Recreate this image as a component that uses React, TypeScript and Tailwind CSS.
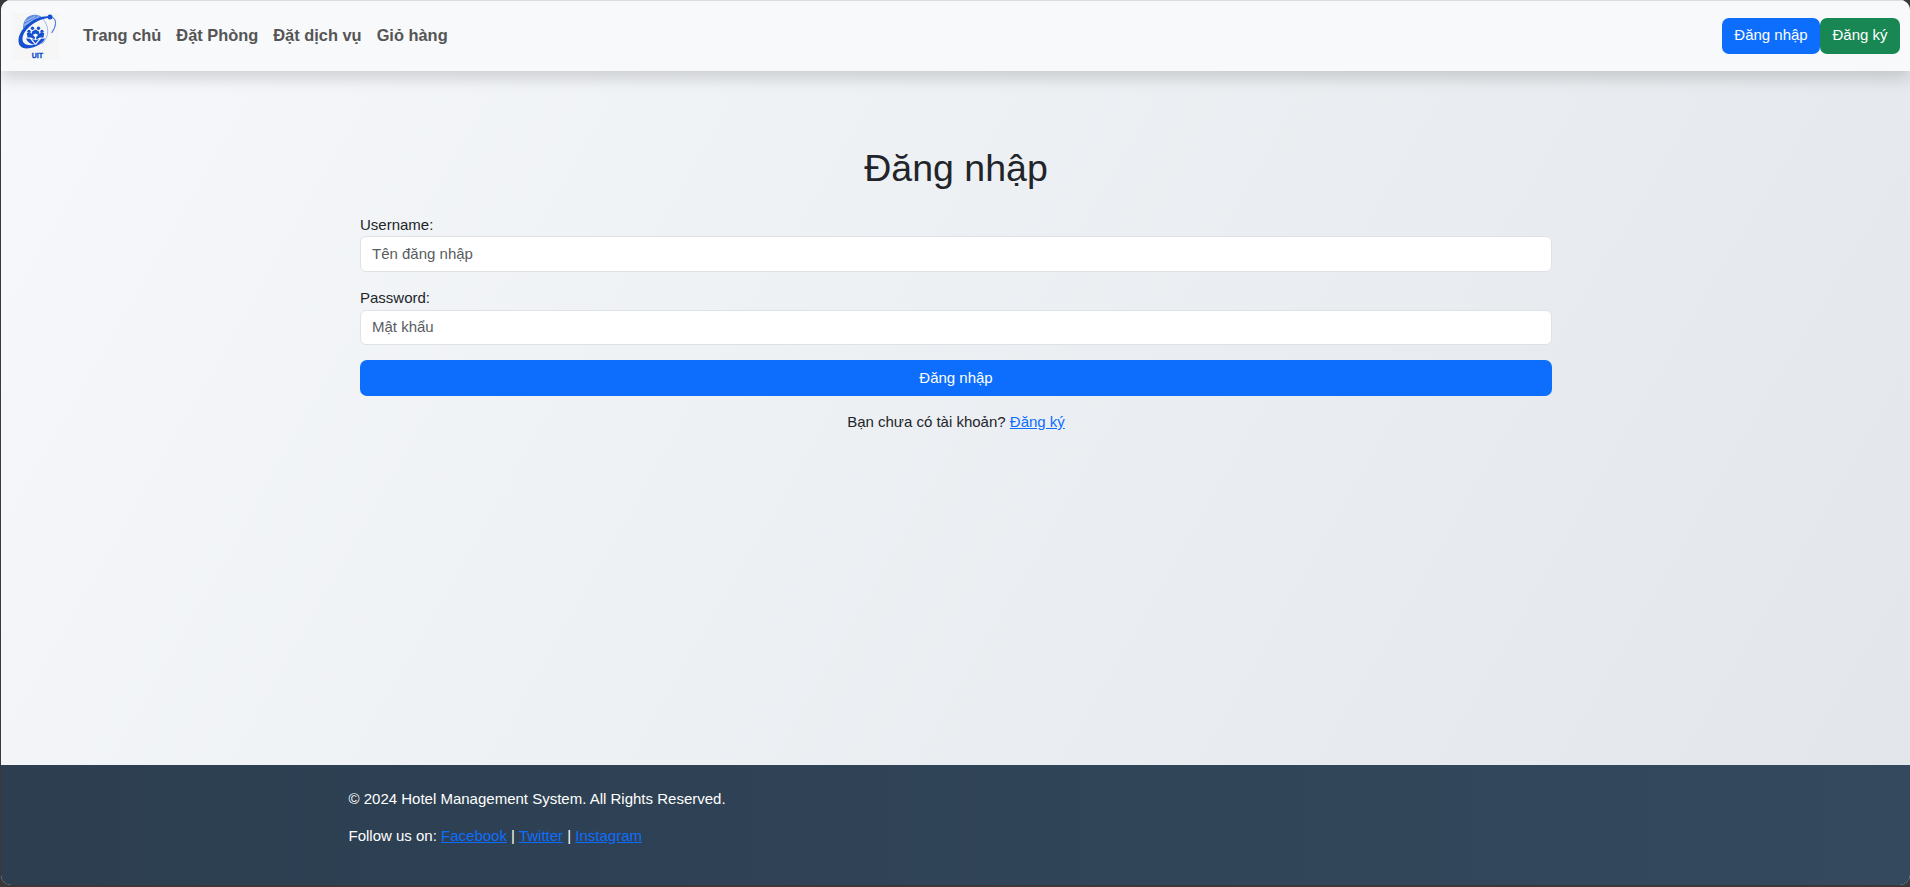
const link = "text-[#0d6efd] underline";

function Logo() {
  return (
    <svg width="47" height="47" viewBox="0 0 47 47" className="shrink-0">
      <rect width="47" height="47" fill="#f6f6f6" />
      <path d="M11 16 C10.500 7 16 1.800 23 1.800 C26 1.800 28.500 3 30 4.300 C22 6 16 9.500 11 16Z" fill="#5f8ee4" />
      <path d="M11.500 12.500 L27 3.500 M13 8.500 L23 3.500" stroke="#dbe6fa" strokeWidth="0.600" />
      <path d="M38 3.300 C24 1.500 7.500 14 6.500 27 C6 37.500 18 38 31 29.500 C19 34 10 33 10.500 25.500 C11 16.500 25 5.500 38 4.800Z" fill="#1550d0" />
      <path d="M39 4 C46 6 44 14 39.500 20" fill="none" stroke="#4f82e0" strokeWidth="1.100" />
      <path d="M31 6 C37 13 38 23 30 31" fill="none" stroke="#8fb0ec" strokeWidth="0.900" />
      <circle cx="38" cy="4" r="2.500" fill="#1550d0" />
      <g fill="#1550d0">
        <circle cx="20.500" cy="15.300" r="1.700" />
        <circle cx="26.500" cy="15.300" r="1.700" />
        <circle cx="17" cy="18.300" r="1.600" />
        <circle cx="30" cy="18.300" r="1.600" />
        <path d="M19.500 22.500 L20 18.500 L23.500 16.500 L27 18.500 L27.500 22.500 L23.500 20.500Z" />
        <path d="M14.800 20 L18.500 19.500 L22.800 24 L22.800 26.500 L19 24.500 L15.500 24.500Z" />
        <path d="M32.200 20 L28.500 19.500 L24.200 24 L24.200 26.500 L28 24.500 L31.500 24.500Z" />
        <path d="M14 25.500 L18 25.800 L22.800 31.500 C18.500 31.500 15.500 29 14 25.500Z" />
        <path d="M33 25.500 L29 25.800 L24.200 31.500 C28.500 31.500 31.500 29 33 25.500Z" />
        <path d="M20 26 L23.500 27.200 L27 26 L23.500 30.500Z" />
      </g>
      <text x="25.300" y="45.300" textAnchor="middle" fontFamily="Liberation Sans, Arial, sans-serif" fontWeight="700" fontSize="7" stroke="#1550d0" strokeWidth="0.350" fill="#1550d0">UIT</text>
    </svg>
  );
}

export default function App() {
  return (
    <div className="h-[887px] w-full overflow-hidden bg-[#3a3838] pb-0.5 pl-px font-['Liberation_Sans',Arial,sans-serif] text-[15px] leading-[22.5px] text-[#212529]">
      <div className="flex h-full flex-col overflow-hidden rounded-[10px] bg-[linear-gradient(120deg,#f6f8fb,#e2e6ea)]">
        <header className="relative flex h-[71px] shrink-0 items-center border-t border-[#dcdcdf] bg-[#f8f9fb] pl-[11px] pr-2.5 shadow-[0_7.5px_15px_rgba(0,0,0,0.15)]">
          <Logo />
          <nav className="ml-6 flex gap-[15px] pb-0.5 text-[16.400px] font-bold text-[#555]">
            <a>Trang chủ</a>
            <a>Đặt Phòng</a>
            <a>Đặt dịch vụ</a>
            <a>Giỏ hàng</a>
          </nav>
          <div className="ml-auto flex text-white">
            <button className="h-9 w-[98px] rounded-[7px] bg-[#0d6efd] pb-0.5">Đăng nhập</button>
            <button className="h-9 w-20 rounded-[7px] bg-[#198754] pb-0.5">Đăng ký</button>
          </div>
        </header>
        <main className="mx-auto w-[1193px] grow pl-px pt-[75px]">
          <h1 className="text-center text-[37.500px] leading-[45px]">Đăng nhập</h1>
          <form className="mt-[23px]">
            <label className="block h-[22px]">Username:</label>
            <input placeholder="Tên đăng nhập" className="block h-9 w-full rounded-md border border-[#dee2e6] bg-white px-[11px] pb-0.5 placeholder:text-[#595c5f]" />
            <label className="mt-[15px] block h-[22px]">Password:</label>
            <input placeholder="Mật khẩu" className="mt-px block h-[35px] w-full rounded-md border border-[#dee2e6] bg-white px-[11px] pb-0.5 placeholder:text-[#595c5f]" />
            <button type="button" className="mt-[15px] block h-9 w-full rounded-[7px] bg-[#0d6efd] text-white">Đăng nhập</button>
          </form>
          <p className="mt-[15px] text-center">
            Bạn chưa có tài khoản? <a className={link}>Đăng ký</a>
          </p>
        </main>
        <footer className="h-[120px] shrink-0 bg-[linear-gradient(90deg,#2c3e50,#34495e)] pt-[23px] text-white">
          <div className="mx-auto w-[1214px]">
            <p>© 2024 Hotel Management System. All Rights Reserved.</p>
            <p className="mt-3.5">
              Follow us on: <a className={link}>Facebook</a> | <a className={link}>Twitter</a> | <a className={link}>Instagram</a>
            </p>
          </div>
        </footer>
      </div>
    </div>
  );
}
